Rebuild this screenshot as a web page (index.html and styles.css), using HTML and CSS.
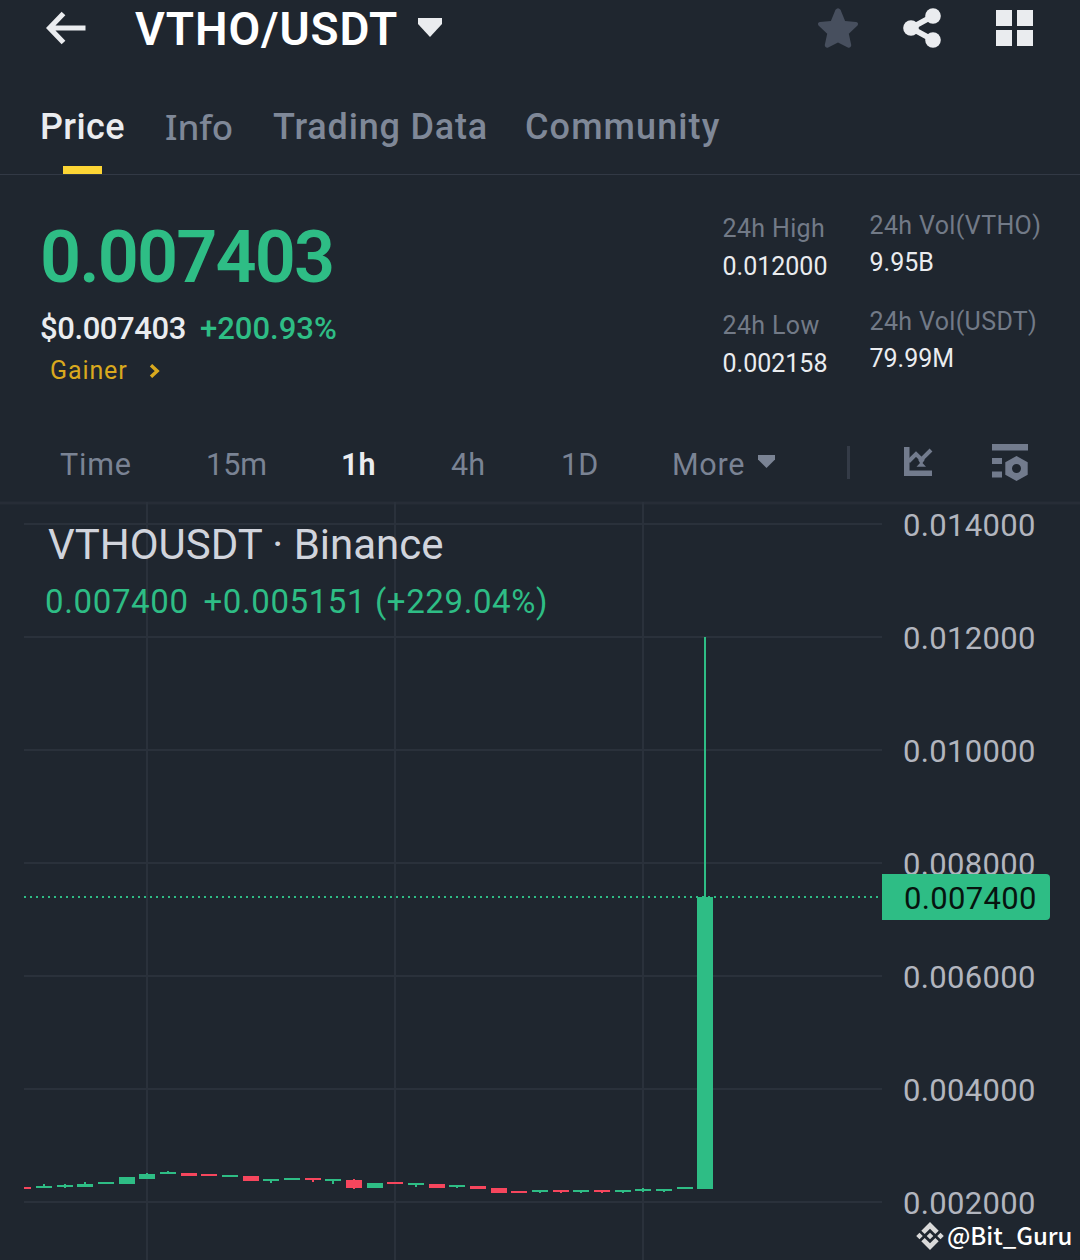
FILE: index.html
```html
<!DOCTYPE html>
<html lang="en">
<head>
<meta charset="utf-8">
<title>VTHO/USDT</title>
<link rel="stylesheet" href="styles.css">
</head>
<body>
<div class="app">
  <header class="header">
    <svg class="back" width="40" height="34" viewBox="0 0 40 34"><path d="M17.5 2.5 3.5 17l14 14.500M4 17h35.500" fill="none" stroke="#eaecef" stroke-width="5.200"/></svg>
    <h1 class="pair">VTHO/USDT</h1>
    <svg class="pair-caret" width="24" height="19" viewBox="0 0 24 19"><path d="M0 0h24v6L12 19 0 6z" fill="#eaecef"/></svg>
    <div class="actions">
      <svg width="40" height="40" viewBox="0 0 40 40"><path d="M17.500 1.800q2.500-3.200 5 0l4.600 11.200 11 1q3 .8 1.400 3.500l-8.700 8.300 2.500 11.500q-.5 3.200-3.500 2.200L20 34.500l-9.800 5q-3 1-3.500-2.200l2.500-11.500L.5 17.500Q-1.100 14.800 1.900 14l11-1z" fill="#474f5e"/></svg>
      <svg width="38" height="40" viewBox="0 0 38 40"><g fill="#eaecef"><circle cx="8" cy="20" r="7.800"/><circle cx="30" cy="8" r="7.800"/><circle cx="30" cy="32" r="7.800"/></g><path d="M30 8 8 20l22 12" fill="none" stroke="#eaecef" stroke-width="5.500"/></svg>
      <svg width="37" height="36" viewBox="0 0 37 36"><path d="M0 0h16v16H0zM21 0h16v16H21zM0 20h16v16H0zM21 20h16v16H21z" fill="#eaecef"/></svg>
    </div>
  </header>

  <nav class="tabs">
    <span class="tab active t-price">Price</span>
    <span class="tab t-info">Info</span>
    <span class="tab t-data">Trading Data</span>
    <span class="tab t-comm">Community</span>
  </nav>

  <section class="summary">
    <div class="quote">
      <div class="last">0.007403</div>
      <div class="sub"><span class="usd">$0.007403</span><span class="change">+200.93%</span></div>
      <div class="gainer"><span>Gainer</span><svg width="11" height="14" viewBox="0 0 11 14"><path d="M2 1.200 8.200 7 2 12.800" fill="none" stroke="#d9a91e" stroke-width="3.400"/></svg></div>
    </div>
    <dl class="stats">
      <div><dt>24h High</dt><dd>0.012000</dd></div>
      <div><dt>24h Low</dt><dd>0.002158</dd></div>
    </dl>
    <dl class="stats vol">
      <div><dt>24h Vol(VTHO)</dt><dd>9.95B</dd></div>
      <div><dt>24h Vol(USDT)</dt><dd>79.99M</dd></div>
    </dl>
  </section>

  <nav class="ranges">
    <span class="r-time">Time</span>
    <span class="r-15">15m</span>
    <span class="r-1h active">1h</span>
    <span class="r-4h">4h</span>
    <span class="r-1d">1D</span>
    <span class="r-more">More</span>
    <svg class="more-caret" width="17" height="13" viewBox="0 0 17 13"><path d="M0 0h17v4.500L8.500 13 0 4.500z" fill="#7a8394"/></svg>
    <i class="divider"></i>
    <svg class="ind" width="29" height="29" viewBox="0 0 29 29"><path d="M0 0h5.500v23.500H28V29H0z" fill="#727b8d"/><path d="m4.500 14.500 7.500-7.500 5.500 5.500 9.500-9.500" fill="none" stroke="#727b8d" stroke-width="4"/><path d="M14 12.500h7l-2.500 3.500 3.500 3.800h-9.500L16 16z" fill="#727b8d"/></svg>
    <svg class="set" width="36" height="37" viewBox="0 0 36 37"><path d="M0 0h36v6.500H0zM0 14h10v6H0zM0 27.500h10v6H0z" fill="#727b8d"/><path fill-rule="evenodd" d="m24.500 12 11.200 6.300v12.400L24.500 37l-11.200-6.300V18.300zM24.500 20a4.500 4.500 0 1 0 0 9 4.500 4.500 0 1 0 0-9z" fill="#727b8d"/></svg>
  </nav>

  <svg class="chart" width="1080" height="759" viewBox="0 501 1080 759">
    <path d="M0 503h1080" stroke="#272d37" stroke-width="3"/>
    <path class="grid" d="M24 524h858M24 637h858M24 750h858M24 863h858M24 976h858M24 1089h858M24 1202h858M147 502v758M395 502v758M643 502v758"/>
    <path class="dotted" d="M24 897h858"/>
    <path class="up" d="M36 1186h16v2h-16zM43 1184h2v3h-2zM57 1185h16v2h-16zM64 1184h2v4h-2zM77 1184h16v3h-16zM84 1182h2v3h-2zM98 1182h16v2h-16zM119 1177h16v7h-16zM139 1174h16v5h-16zM146 1173h2v3h-2zM160 1172h16v2h-16zM167 1171h2v2h-2zM222 1175h16v2h-16zM263 1179h16v2h-16zM270 1180h2v3h-2zM284 1178h16v2h-16zM325 1179h16v2h-16zM332 1180h2v4h-2zM367 1183h16v5h-16zM408 1183h16v2h-16zM415 1184h2v3h-2zM449 1185h16v2h-16zM456 1186h2v2h-2zM532 1190h16v2h-16zM539 1190h2v3h-2zM573 1190h16v2h-16zM580 1190h2v3h-2zM615 1190h16v2h-16zM622 1190h2v3h-2zM635 1189h16v2h-16zM642 1188h2v4h-2zM656 1189h16v2h-16zM663 1190h2v2h-2zM677 1187h16v2h-16zM697 897h16v292h-16zM704 637h2v261h-2z"/>
    <path class="down" d="M24 1187h7v2h-7zM181 1173h16v3h-16zM201 1174h16v2h-16zM243 1176h16v5h-16zM305 1178h16v2h-16zM312 1179h2v3h-2zM346 1180h16v8h-16zM353 1179h2v10h-2zM387 1182h16v2h-16zM429 1184h16v4h-16zM470 1186h16v3h-16zM491 1188h16v5h-16zM511 1191h16v2h-16zM553 1190h16v2h-16zM560 1190h2v3h-2zM594 1190h16v2h-16zM601 1190h2v3h-2z"/>
    <text class="symbol" x="48" y="559" textLength="395.500">VTHOUSDT · Binance</text>
    <text class="delta" x="45" y="613" textLength="143">0.007400</text>
    <text class="delta" x="203.500" y="613" textLength="344">+0.005151 (+229.04%)</text>
    <g class="axis">
      <text x="903" y="536" textLength="132.500">0.014000</text>
      <text x="903" y="649" textLength="132.500">0.012000</text>
      <text x="903" y="762" textLength="132.500">0.010000</text>
      <text x="903" y="875" textLength="132.500">0.008000</text>
      <text x="903" y="988" textLength="132.500">0.006000</text>
      <text x="903" y="1101" textLength="132.500">0.004000</text>
      <text x="903" y="1214" textLength="132.500">0.002000</text>
    </g>
    <path d="M882 874h164q4 0 4 4v38q0 4-4 4H882z" fill="#2ebd85"/>
    <text class="tag" x="904" y="909" textLength="132.500">0.007400</text>
    <g transform="translate(930 1236)" fill="#d9d9d9">
      <path d="M0-14 8.700-5.300 5.300-2 0-7.300-5.300-2-8.700-5.300zM0 14 8.700 5.300 5.300 2 0 7.300-5.300 2-8.700 5.300zM0-3.300 3.300 0 0 3.300-3.300 0zM-10.500-3.300-7.200 0l-3.300 3.300L-13.800 0zM10.500-3.300 13.800 0l-3.300 3.300L7.200 0z"/>
    </g>
    <text class="handle" x="947" y="1245" textLength="125.500">@Bit_Guru</text>
  </svg>
</div>
</body>
</html>
```
FILE: styles.css
```css
* { box-sizing: border-box; margin: 0; padding: 0; }
body { background: #1f262f; font-family: Roboto, "Liberation Sans", sans-serif; }
svg { display: block; flex: none; }
.app { width: 1080px; height: 1260px; overflow: hidden; }

.header { display: flex; align-items: center; height: 55px; padding: 0 47px 0 46px; }
.pair { margin: 3px 0 0 49px; width: 283px; font-size: 46px; font-weight: 600; line-height: 55px; letter-spacing: 0.9px; color: #fff; white-space: nowrap; }
.actions { display: flex; align-items: center; gap: 45px; margin-left: auto; }
.actions svg:last-child { margin-left: 10px; }

.tabs { display: grid; grid-template-columns: 125px 108px 252px 1fr; height: 120px; padding: 48px 0 0 40px; border-bottom: 1px solid #323945; }
.tab { justify-self: start; position: relative; height: 71px; font-size: 36px; font-weight: 500; line-height: 48px; letter-spacing: 0.8px; color: #7f8898; white-space: nowrap; }
.tab.active { color: #eaecef; letter-spacing: 0.4px; }
.tab.active::after { content: ""; position: absolute; left: 23px; bottom: 0; width: 39px; height: 8px; background: #fcd535; }
.t-info { font-family: "Noto Sans", sans-serif; font-size: 35px; letter-spacing: 0; }
.t-comm { letter-spacing: 1.1px; }

.summary { display: flex; height: 253px; padding: 39px 0 0 40px; }
.quote { width: 682.500px; padding-top: 8px; }
.last { font-size: 72px; line-height: 72px; font-weight: 600; letter-spacing: -1.9px; color: #2ebd85; }
.sub { display: flex; gap: 14px; margin-top: 17px; font-size: 31px; line-height: 36px; font-weight: 500; letter-spacing: -0.4px; color: #eaecef; }
.change { color: #2ebd85; letter-spacing: 0; }
.gainer { display: flex; align-items: center; gap: 21px; margin-top: 9px; padding-left: 10px; font-size: 25px; line-height: 30px; letter-spacing: 0.9px; color: #d9a91e; }
.stats { width: 147px; font-size: 25px; line-height: 30px; white-space: nowrap; }
.stats > div { height: 97px; }
.stats dt { color: #727a87; letter-spacing: 0.35px; }
.stats dd { margin-top: 8px; color: #eaecef; }
.vol { width: auto; margin-top: -3px; }
.vol > div { height: 96px; }
.vol dd { margin-top: 7px; }

.ranges { display: flex; align-items: center; height: 73px; padding-left: 60px; font-size: 30.500px; color: #7a8394; }
.ranges .active { color: #eaecef; font-weight: 600; }
.r-time { width: 146px; letter-spacing: 0.8px; }
.r-15 { width: 135px; }
.r-1h { width: 110px; }
.r-4h { width: 110px; }
.r-1d { width: 111px; }
.r-more { width: 86px; letter-spacing: 0.7px; }
.more-caret { margin-top: -7px; }
.divider { width: 3px; height: 33px; margin: -4px 0 0 72px; background: #343b47; }
.ind { margin: -6px 0 0 54px; }
.set { margin: -4px 0 0 59px; }

.grid { stroke: #2a313b; stroke-width: 2; }
.dotted { stroke: #2ebd85; stroke-width: 2; stroke-dasharray: 2 4; }
.up { fill: #2ebd85; }
.down { fill: #f6465d; }
.symbol { font-size: 42px; fill: #d1d4dc; }
.delta { font-size: 33px; fill: #2ebd85; }
.axis { font-size: 31px; fill: #b2b5be; }
.tag { font-size: 31px; fill: #07140f; }
.handle { font: 500 24px "Noto Sans CJK SC", sans-serif; fill: #fff; }
```
